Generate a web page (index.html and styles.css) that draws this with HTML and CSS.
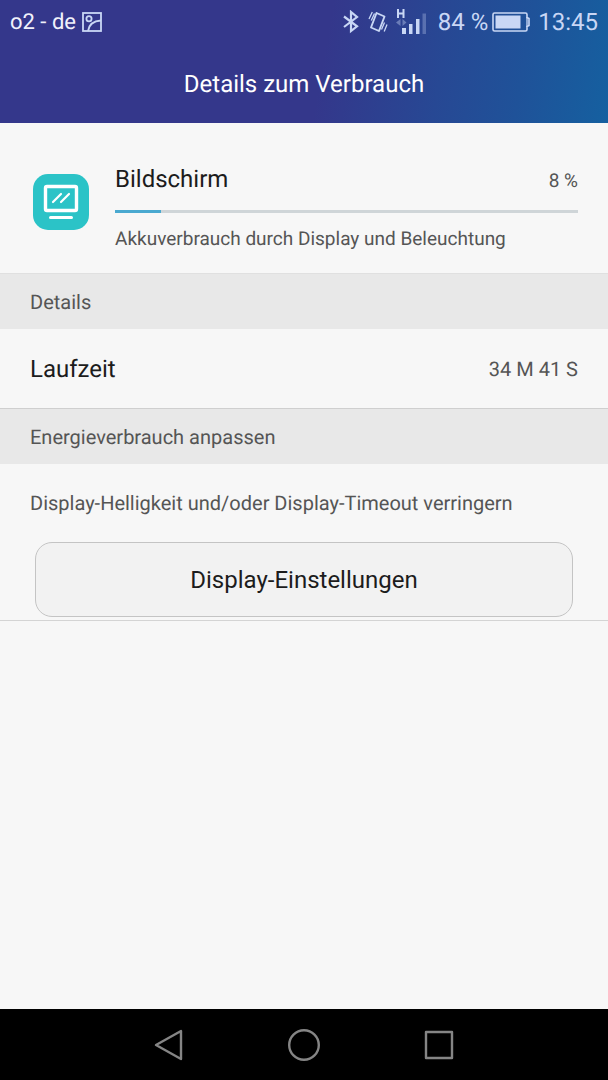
FILE: index.html
```html
<!DOCTYPE html>
<html lang="de">
<head>
<meta charset="utf-8">
<meta name="viewport" content="width=device-width, initial-scale=1">
<title>Details zum Verbrauch</title>
<link rel="stylesheet" href="styles.css">
</head>
<body>
<header class="header">
  <div class="status">
    <span class="carrier">o2 - de</span>
    <svg class="status-picture" width="20" height="20" viewBox="0 0 20 20" fill="none" stroke="currentColor" stroke-width="1.8"><rect x="1" y="1" width="18" height="18"/><circle cx="7" cy="6.8" r="2.6"/><path d="M6 19C7 12.500 11 9 19 8.500"/></svg>
    <div class="status-right">
      <div class="signals">
        <svg width="18" height="24" viewBox="0 0 18 24" fill="none" stroke="currentColor" stroke-width="2.200"><path d="M2 6.500l13 9.800L9 21V2l6 5L2 17"/></svg>
        <svg width="20" height="22" viewBox="0 0 20 22" fill="none" stroke="currentColor" stroke-width="1.9"><path d="M8.500 2l8 3.500-5.500 14.500-8-3.500z" stroke-linejoin="round"/><path d="M1 8L4.300 1M3.300 9.500L6.500 2.500M13.500 18.500l3-7M16.200 20.500l2.800-7" stroke-width="1.300"/></svg>
        <svg width="32" height="26" viewBox="0 0 32 26" fill="currentColor"><path d="M2 0v9M7.500 0v9M2 4.500h6" fill="none" stroke="currentColor" stroke-width="2"/><path d="M4.500 10v7L0 13.500zM6.500 10v7l4-3.500z" opacity=".4"/><rect x="6" y="19" width="4" height="6"/><rect x="13" y="15" width="3.500" height="10"/><rect x="20" y="10" width="3.500" height="15"/><rect x="26.500" y="4.500" width="3.500" height="20.500" opacity=".3"/></svg>
      </div>
      <span class="percent">84 %</span>
      <svg width="38" height="20" viewBox="0 0 38 20"><path d="M2.500 1h31q1.500 0 1.500 1.500v3l2 1v7l-2 1v3q0 1.500-1.500 1.500h-31Q1 19 1 17.500v-15Q1 1 2.500 1z" fill="none" stroke="currentColor" stroke-width="1.600"/><path d="M35 5v10" stroke="currentColor" stroke-width="1.300"/><rect x="3.500" y="3.500" width="25" height="13" fill="currentColor"/></svg>
      <time class="clock">13:45</time>
    </div>
  </div>
  <h1 class="title">Details zum Verbrauch</h1>
</header>
<main class="content">
  <section class="usage">
    <svg class="app-icon" width="56" height="56" viewBox="0 0 56 56" fill="none" stroke="#fff" stroke-linecap="round"><rect width="56" height="56" rx="15" fill="#2bc3c7" stroke="none"/><rect x="12.500" y="12.500" width="31" height="24" rx="1.500" stroke-width="3.400"/><path d="M17.500 43.500H38.500" stroke-width="3"/><path d="M20 28l8-8M28 28l8-8" stroke-width="2.200"/></svg>
    <div class="usage-body">
      <div class="usage-head"><h2 class="name">Bildschirm</h2><span class="share">8 %</span></div>
      <div class="track" role="progressbar" aria-label="Akkuverbrauch" aria-valuenow="8" aria-valuemin="0" aria-valuemax="100"><div class="fill" style="width:10%"></div></div>
      <p class="caption">Akkuverbrauch durch Display und Beleuchtung</p>
    </div>
  </section>
  <h2 class="section">Details</h2>
  <div class="row"><span class="label">Laufzeit</span><span class="value">34 M 41 S</span></div>
  <h2 class="section section-ruled">Energieverbrauch anpassen</h2>
  <section class="adjust">
    <p class="hint">Display-Helligkeit und/oder Display-Timeout verringern</p>
    <button class="settings" type="button">Display-Einstellungen</button>
  </section>
</main>
<nav class="nav">
  <button class="nav-button" type="button" aria-label="Zurück"><svg width="32" height="32" viewBox="0 0 32 32"><path d="M28 2v28L3 16z"/></svg></button>
  <button class="nav-button" type="button" aria-label="Startseite"><svg width="32" height="32" viewBox="0 0 32 32"><circle cx="16" cy="16" r="14.800"/></svg></button>
  <button class="nav-button" type="button" aria-label="Letzte Apps"><svg width="32" height="32" viewBox="0 0 32 32"><rect x="3" y="3" width="26" height="26"/></svg></button>
</nav>
</body>
</html>
```
FILE: styles.css
```css
* { box-sizing: border-box; }
body {
  margin: 0;
  min-height: 100vh;
  display: flex;
  flex-direction: column;
  background: #f7f7f7;
  color: #1c1c1c;
  font-family: Roboto, "Liberation Sans", sans-serif;
  text-rendering: geometricPrecision;
}
h1, h2, p { margin: 0; font-weight: 400; }
button { font: inherit; color: inherit; }
svg { display: block; flex: none; }

.header {
  color: #fff;
  background: linear-gradient(100deg, #34378b 0%, #34378b 53%, #274894 72%, #1f5299 85%, #1560a0 100%);
}
.status {
  height: 44px;
  padding: 0 10px;
  display: flex;
  align-items: center;
  color: #c9d7f5;
}
.carrier { font-size: 22px; color: #f0f1fb; }
.status-picture { margin-left: 6px; }
.status-right {
  margin-left: auto;
  display: flex;
  align-items: center;
  gap: 4px;
}
.signals {
  display: flex;
  align-items: center;
  gap: 8px;
  margin-right: 6px;
}
.percent { font-size: 24px; }
.clock { font-size: 24px; margin-left: 4px; }
.title {
  height: 79px;
  line-height: 80px;
  text-align: center;
  font-size: 24px;
}

.content { flex: 1; }
.usage {
  display: flex;
  align-items: flex-start;
  gap: 26px;
  padding: 40px 30px 20px 33px;
}
.app-icon { margin-top: 11px; }
.usage-body { flex: 1; }
.usage-head {
  display: flex;
  justify-content: space-between;
  align-items: flex-start;
  line-height: 32px;
}
.name, .label, .settings { font-size: 24px; }
.share { font-size: 19px; color: #555; padding-top: 2px; }
.track { height: 3px; margin-top: 13px; background: #cfd5d8; }
.fill { height: 3px; background: #4aa9d0; }
.caption { margin-top: 12px; font-size: 19px; line-height: 28px; color: #555; }

.section {
  height: 56px;
  padding: 0 30px;
  line-height: 57px;
  font-size: 20px;
  color: #555;
  background: #e8e8e8;
  border-top: 1px solid #e0e0e0;
}
.section-ruled { border-top-color: #cfcfcf; }
.row {
  height: 79px;
  padding: 0 30px;
  display: flex;
  justify-content: space-between;
  align-items: center;
}
.value { font-size: 20px; color: #555; }
.adjust {
  padding: 24px 35px 3px;
  border-bottom: 1px solid #d4d4d4;
}
.hint { margin: 0 -5px 24px; font-size: 20px; line-height: 30px; color: #555; }
.settings {
  display: block;
  width: 100%;
  height: 75px;
  background: #f2f2f2;
  border: 1px solid #c4c4c4;
  border-radius: 17px;
}

.nav {
  height: 71px;
  padding: 0 102px;
  display: flex;
  justify-content: space-between;
  align-items: center;
  background: #000;
}
.nav-button {
  flex: 1;
  height: 71px;
  padding: 0;
  display: flex;
  justify-content: center;
  align-items: center;
  background: none;
  border: 0;
}
.nav-button svg {
  fill: none;
  stroke: #858585;
  stroke-width: 2.4;
  stroke-linejoin: round;
}
```
